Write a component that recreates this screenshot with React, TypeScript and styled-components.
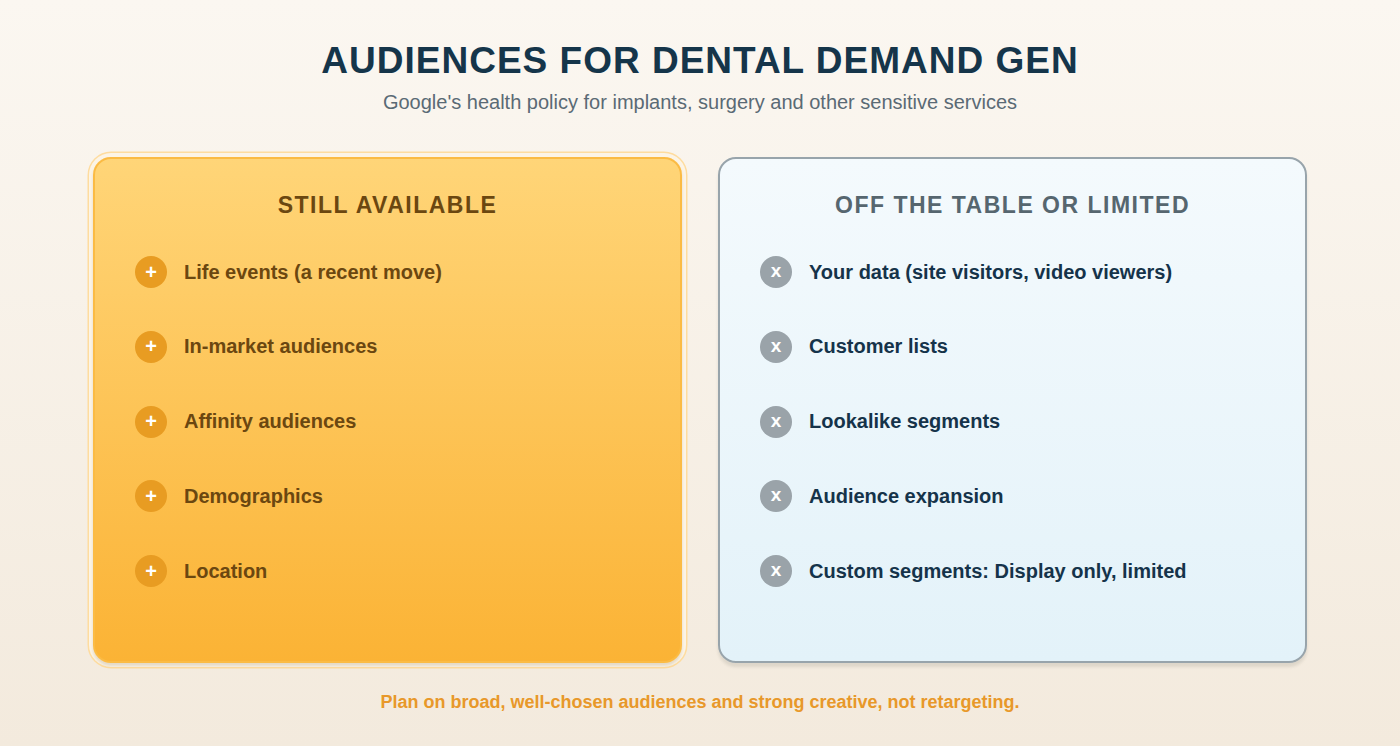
import React from "react";
import styled, { createGlobalStyle } from "styled-components";

const GlobalStyle = createGlobalStyle`
  html, body {
    margin: 0;
    padding: 0;
  }
  body {
    font-family: "Liberation Sans", Arial, Helvetica, sans-serif;
    background: linear-gradient(180deg, #fbf7f1 0%, #f3eadd 100%);
    min-height: 100vh;
  }
`;

const available = [
  "Life events (a recent move)",
  "In-market audiences",
  "Affinity audiences",
  "Demographics",
  "Location",
];

const limited = [
  "Your data (site visitors, video viewers)",
  "Customer lists",
  "Lookalike segments",
  "Audience expansion",
  "Custom segments: Display only, limited",
];

// Page layout
const Page = styled.div`
  height: 746px;
  box-sizing: border-box;
  padding-top: 39px;
  display: flex;
  flex-direction: column;
  align-items: center;
`;

const Title = styled.h1`
  margin: 0;
  font-size: 37px;
  line-height: 44px;
  font-weight: 700;
  letter-spacing: 1px;
  color: #15354a;
`;

const Subtitle = styled.p`
  margin: 7px 0 0;
  font-size: 20px;
  line-height: 24px;
  color: #5a6a75;
`;

const Columns = styled.div`
  margin-top: 43px;
  display: flex;
  gap: 36px;
`;

const Card = styled.section<{ $tone: "warm" | "cool" }>`
  width: 589px;
  height: 506px;
  box-sizing: border-box;
  padding: 33px 40px 0;
  border-radius: 18px;
  border: 2px solid ${(p) => (p.$tone === "warm" ? "#fbbb44" : "#98a4ab")};
  background: ${(p) =>
    p.$tone === "warm"
      ? "linear-gradient(180deg, #ffd578 0%, #fbb335 100%)"
      : "linear-gradient(180deg, #f4fafd 0%, #e3f2f9 100%)"};
  box-shadow: ${(p) =>
    p.$tone === "warm"
      ? "0 3px 3px rgba(120, 100, 60, 0.18), 0 0 0 4px #fcf4e6, 0 0 0 5.5px #fedc9f"
      : "0 4px 3px rgba(90, 90, 80, 0.14)"};
`;

const CardTitle = styled.h2<{ $tone: "warm" | "cool" }>`
  margin: 0;
  text-align: center;
  font-size: 23px;
  line-height: 26px;
  font-weight: 700;
  letter-spacing: 1.5px;
  color: ${(p) => (p.$tone === "warm" ? "#6b4710" : "#56666f")};
`;

const List = styled.ul`
  list-style: none;
  margin: 38px 0 0;
  padding: 0;
  display: flex;
  flex-direction: column;
  gap: 42.75px;
`;

const Item = styled.li<{ $tone: "warm" | "cool" }>`
  display: flex;
  align-items: center;
  gap: 17px;
  height: 32px;
  font-size: 20px;
  font-weight: 700;
  color: ${(p) => (p.$tone === "warm" ? "#6b4710" : "#15334a")};
`;

const Badge = styled.span<{ $tone: "warm" | "cool" }>`
  flex: none;
  width: 32px;
  height: 32px;
  border-radius: 50%;
  display: flex;
  align-items: center;
  justify-content: center;
  background: ${(p) => (p.$tone === "warm" ? "#e89c22" : "#9aa3a9")};
  color: #ffffff;
  font-weight: 700;
  font-size: ${(p) => (p.$tone === "warm" ? "20px" : "19px")};
  line-height: 1;
  padding-bottom: ${(p) => (p.$tone === "warm" ? "1px" : "3px")};
  box-sizing: border-box;
`;

const Footer = styled.p`
  margin: 28px 0 0;
  font-size: 18px;
  line-height: 22px;
  font-weight: 700;
  color: #e8982a;
`;

const Column = ({
  tone,
  title,
  items,
}: {
  tone: "warm" | "cool";
  title: string;
  items: string[];
}) => (
  <Card $tone={tone}>
    <CardTitle $tone={tone}>{title}</CardTitle>
    <List>
      {items.map((item) => (
        <Item key={item} $tone={tone}>
          <Badge $tone={tone}>{tone === "warm" ? "+" : "x"}</Badge>
          {item}
        </Item>
      ))}
    </List>
  </Card>
);

export default function App() {
  return (
    <>
      <GlobalStyle />
      <Page>
        <Title>AUDIENCES FOR DENTAL DEMAND GEN</Title>
        <Subtitle>
          Google's health policy for implants, surgery and other sensitive services
        </Subtitle>
        <Columns>
          <Column tone="warm" title="STILL AVAILABLE" items={available} />
          <Column tone="cool" title="OFF THE TABLE OR LIMITED" items={limited} />
        </Columns>
        <Footer>
          Plan on broad, well-chosen audiences and strong creative, not retargeting.
        </Footer>
      </Page>
    </>
  );
}
